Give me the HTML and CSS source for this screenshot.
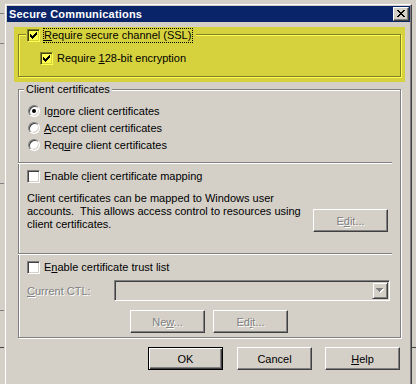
FILE: index.html
```html
<!DOCTYPE html>
<html lang="en">
<head>
  <meta charset="UTF-8" />
  <title>Secure Communications</title>
  <link rel="stylesheet" href="styles.css">
</head>
<body>
  <div class="dialog">
    <div class="titlebar">
      <span class="title">Secure Communications</span>
      <button class="close-btn" type="button" aria-label="Close">
        <svg width="8" height="7" viewBox="0 0 8 7" shape-rendering="crispEdges"><path d="M0 0h2v1H0zM6 0h2v1H6zM1 1h2v1H1zM5 1h2v1H5zM2 2h4v1H2zM3 3h2v1H3zM2 4h4v1H2zM1 5h2v1H1zM5 5h2v1H5zM0 6h2v1H0zM6 6h2v1H6z"/></svg>
      </button>
    </div>

    <div class="dialog-body">
      <div class="highlight">
        <div class="group group-ssl">
          <div class="legend legend-check">
            <span class="check"><svg width="7" height="7" viewBox="0 0 7 7" shape-rendering="crispEdges"><path d="M0 2h1v3H0zM1 3h1v3H1zM2 4h1v3H2zM3 3h1v3H3zM4 2h1v3H4zM5 1h1v3H5zM6 0h1v3H6z"/></svg></span>
            <span class="focus"><u>R</u>equire secure channel (SSL)</span>
          </div>
          <div class="row">
            <span class="check"><svg width="7" height="7" viewBox="0 0 7 7" shape-rendering="crispEdges"><path d="M0 2h1v3H0zM1 3h1v3H1zM2 4h1v3H2zM3 3h1v3H3zM4 2h1v3H4zM5 1h1v3H5zM6 0h1v3H6z"/></svg></span>
            <span>Require <u>1</u>28-bit encryption</span>
          </div>
        </div>
      </div>

      <div class="group group-client">
        <div class="legend">Client certificates</div>

        <div class="section section-radios">
          <div class="radio-row"><span class="radio selected"></span><span>Ig<u>n</u>ore client certificates</span></div>
          <div class="radio-row"><span class="radio"></span><span><u>A</u>ccept client certificates</span></div>
          <div class="radio-row"><span class="radio"></span><span>Req<u>u</u>ire client certificates</span></div>
        </div>

        <div class="separator"></div>

        <div class="section section-mapping">
          <div class="row">
            <span class="check"></span>
            <span>Enable c<u>l</u>ient certificate mapping</span>
          </div>
          <div class="mapping-info">
            <p>Client certificates can be mapped to Windows user<br>accounts.&nbsp; This allows access control to resources using<br>client certificates.</p>
            <button class="btn disabled" type="button">E<u>d</u>it...</button>
          </div>
        </div>

        <div class="separator"></div>

        <div class="section section-ctl">
          <div class="row">
            <span class="check"></span>
            <span>E<u>n</u>able certificate trust list</span>
          </div>
          <div class="ctl-row">
            <span class="ctl-label disabled"><u>C</u>urrent CTL:</span>
            <div class="combo">
              <span class="combo-arrow">
                <svg width="8" height="5" viewBox="0 0 8 5" shape-rendering="crispEdges"><path fill="#fff" d="M1 1h7v1H1zM2 2h5v1H2zM3 3h3v1H3zM4 4h1v1H4z"/><path fill="#808080" d="M0 0h7v1H0zM1 1h5v1H1zM2 2h3v1H2zM3 3h1v1H3z"/></svg>
              </span>
            </div>
          </div>
          <div class="ctl-buttons">
            <button class="btn disabled" type="button">Ne<u>w</u>...</button>
            <button class="btn disabled" type="button">Ed<u>i</u>t...</button>
          </div>
        </div>
      </div>

      <div class="dialog-buttons">
        <button class="btn btn-default" type="button">OK</button>
        <button class="btn" type="button">Cancel</button>
        <button class="btn" type="button"><u>H</u>elp</button>
      </div>
    </div>
  </div>
</body>
</html>
```

FILE: styles.css
```css
* {
  box-sizing: border-box;
}

html, body {
  margin: 0;
  padding: 0;
}

body {
  width: 416px;
  height: 384px;
  overflow: hidden;
  padding: 4px 0 0 5px;
  font-family: "Liberation Sans", Arial, sans-serif;
  font-size: 11px;
  color: #000;
  background-color: #d4d0c8;
  /* edges of the window behind the dialog */
  background-image:
    linear-gradient(#808080, #808080),
    linear-gradient(#808080, #808080),
    linear-gradient(#808080, #808080),
    linear-gradient(#808080, #808080),
    linear-gradient(#404040, #404040),
    linear-gradient(#404040, #404040);
  background-repeat: no-repeat;
  background-size: 4px 1px, 4px 1px, 4px 1px, 4px 1px, 4px 1px, 4px 1px;
  background-position: 0 13px, 0 43px, 0 183px, 0 310px, 0 347px, 412px 347px;
}

.dialog {
  width: 407px;
  height: 380px;
  padding: 1px 1px 0 1px;
  border-top: 1px solid #fff;
  border-left: 1px solid #fff;
  border-right: 1px solid #404040;
  box-shadow: inset -1px 0 #808080;
  background: #d4d0c8;
}

/* ---- title bar ---- */
.titlebar {
  height: 16px;
  padding: 0 1px 0 2px;
  display: flex;
  align-items: center;
  justify-content: space-between;
  background: #0a246a;
  color: #fff;
  font-weight: bold;
}

.title {
  letter-spacing: 0.2px;
}

.close-btn {
  width: 16px;
  height: 14px;
  padding: 0 0 1px 0;
  display: flex;
  align-items: center;
  justify-content: center;
  background: #d4d0c8;
  border: 1px solid;
  border-color: #fff #404040 #404040 #fff;
  box-shadow: inset -1px -1px #808080;
}

.close-btn svg {
  display: block;
}

/* ---- body ---- */
.dialog-body {
  padding: 5px 5px 0 7px;
}

.highlight {
  background: #d6d23e;
  padding: 7px 4px 5px 4px;
}

.group {
  position: relative;
  border: 1px solid #808080;
  box-shadow: inset 1px 1px #fff, 1px 1px #fff;
}

.highlight .group {
  border-color: #80802a;
  box-shadow: inset 1px 1px #ffff4d, 1px 1px #ffff4d;
}

.legend {
  position: absolute;
  top: -7px;
  left: 5px;
  padding: 0 2px;
  line-height: 13px;
  background: #d4d0c8;
}

.legend-check {
  left: 7px;
  height: 15px;
  padding: 0 3px 0 1px;
  display: flex;
  align-items: center;
  gap: 3px;
  background: #d6d23e;
}

.focus {
  border: 1px dotted #000;
  padding-right: 1px;
  line-height: 13px;
}

.group-ssl {
  padding: 17px 0 11px 21px;
}

.row {
  display: flex;
  align-items: center;
  gap: 4px;
  height: 13px;
  line-height: 13px;
}

/* ---- checkbox & radio ---- */
.check {
  width: 13px;
  height: 13px;
  flex: none;
  display: flex;
  align-items: center;
  justify-content: center;
  background: #fff;
  border: 1px solid;
  border-color: #808080 #fff #fff #808080;
  box-shadow: inset 1px 1px #404040, inset -1px -1px #d4d0c8;
}

.check svg {
  display: block;
}

.highlight .check {
  background: #ffff4d;
  border-color: #80802a #ffff4d #ffff4d #80802a;
  box-shadow: inset 1px 1px #404013, inset -1px -1px #d4d03c;
}

.radio {
  position: relative;
  width: 12px;
  height: 12px;
  flex: none;
  margin-left: 1px;
  border-radius: 50%;
  background: #fff;
  border: 1px solid;
  border-color: #808080 #fff #fff #808080;
  box-shadow: inset 1px 1px #404040, inset -1px -1px #d4d0c8;
}

.radio.selected::after {
  content: "";
  position: absolute;
  left: 3px;
  top: 3px;
  width: 4px;
  height: 4px;
  border-radius: 50%;
  background: #000;
}

/* ---- client certificates group ---- */
.group-client {
  margin: 7px 4px 0 4px;
}

.section {
  padding-left: 8px;
}

.section-radios {
  padding-top: 12px;
  padding-bottom: 9px;
}

.radio-row {
  display: flex;
  align-items: center;
  gap: 4px;
  height: 17px;
}

.separator {
  width: 374px;
  height: 2px;
  margin-left: -1px;
  border-top: 1px solid #808080;
  border-bottom: 1px solid #fff;
}

.section-mapping {
  padding-top: 6px;
  padding-bottom: 21px;
}

.mapping-info {
  display: flex;
  margin-top: 9px;
}

.mapping-info p {
  flex: 1;
  margin: 0;
  line-height: 13px;
  white-space: nowrap;
}

.mapping-info .btn {
  margin: 17px 12px 0 0;
}

.section-ctl {
  padding-top: 6px;
  padding-bottom: 4px;
}

.ctl-row {
  display: flex;
  align-items: center;
  height: 21px;
  margin-top: 6px;
}

.ctl-label {
  width: 87px;
}

.combo {
  width: 276px;
  height: 21px;
  padding: 1px;
  display: flex;
  justify-content: flex-end;
  background: #d4d0c8;
  border: 1px solid;
  border-color: #808080 #fff #fff #808080;
  box-shadow: inset 1px 1px #404040, inset -1px -1px #d4d0c8;
}

.combo-arrow {
  width: 16px;
  height: 17px;
  display: flex;
  align-items: center;
  justify-content: center;
  border: 1px solid;
  border-color: #d4d0c8 #404040 #404040 #d4d0c8;
  box-shadow: inset 1px 1px #fff, inset -1px -1px #808080;
}

.combo-arrow svg {
  display: block;
}

.ctl-buttons {
  display: flex;
  gap: 8px;
  margin: 9px 0 0 103px;
}

/* ---- buttons ---- */
.btn {
  width: 75px;
  height: 23px;
  padding: 0;
  font-family: inherit;
  font-size: 11px;
  color: #000;
  background: #d4d0c8;
  border: 1px solid;
  border-color: #fff #404040 #404040 #fff;
  box-shadow: inset -1px -1px #808080;
}

.btn-default {
  border-color: #000;
  box-shadow: inset 1px 1px #fff, inset -1px -1px #404040, inset -2px -2px #808080;
  margin-right: 1px;
}

.disabled {
  color: #808080;
  text-shadow: 1px 1px #fff;
}

.dialog-buttons {
  display: flex;
  justify-content: flex-end;
  gap: 13px;
  margin: 9px 5px 0 0;
}
```
